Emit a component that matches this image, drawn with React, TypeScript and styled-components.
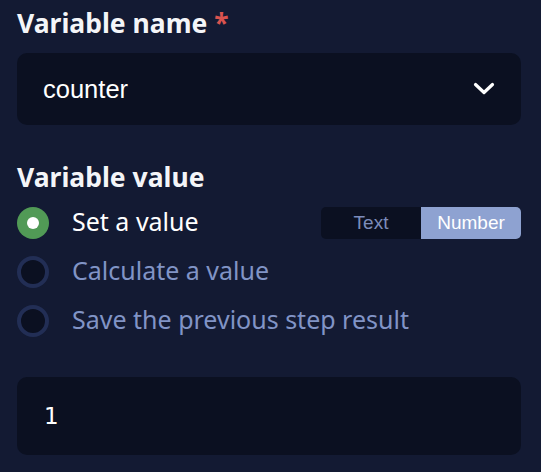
import React, { useState } from "react";
import styled, { createGlobalStyle } from "styled-components";

const Global = createGlobalStyle`
  html, body { margin: 0; padding: 0; background: #131a33; }
  body { font-family: "Noto Sans", sans-serif; }
`;

const Page = styled.div`
  width: 541px;
  height: 472px;
  box-sizing: border-box;
  padding: 5px 20px 0 17px;
  background: #131a33;
  display: flex;
  flex-direction: column;
`;

const Label = styled.div<{ $mt?: number }>`
  font-family: "Noto Sans", sans-serif;
  font-weight: 700;
  font-size: 26.5px;
  line-height: 36px;
  color: #f4f5f8;
  margin-top: ${(p) => p.$mt ?? 0}px;
`;

const Star = styled.span`
  color: #d9534f;
  margin-left: 7px;
`;

const Select = styled.div`
  margin-top: 12px;
  height: 72px;
  border-radius: 10px;
  background: #0b1021;
  display: flex;
  align-items: center;
  justify-content: space-between;
  padding: 0 26px 0 26px;
  color: #ffffff;
  font-family: "Liberation Sans", Arial, sans-serif;
  font-size: 25.5px;
`;

const Options = styled.div`
  margin-top: 12px;
  display: flex;
  flex-direction: column;
  gap: 17px;
`;

const Row = styled.div`
  display: flex;
  align-items: center;
  height: 32px;
`;

const Radio = styled.div<{ $on?: boolean }>`
  width: 32px;
  height: 32px;
  box-sizing: border-box;
  border-radius: 50%;
  flex-shrink: 0;
  display: flex;
  align-items: center;
  justify-content: center;
  background: ${(p) => (p.$on ? "#519a56" : "#0b1021")};
  border: ${(p) => (p.$on ? "none" : "4px solid #222e55")};
  &::after {
    content: "";
    display: ${(p) => (p.$on ? "block" : "none")};
    width: 12px;
    height: 12px;
    border-radius: 50%;
    background: #ffffff;
  }
`;

const OptText = styled.span<{ $on?: boolean }>`
  margin-left: 23px;
  padding-bottom: 4px;
  font-family: "Noto Sans", sans-serif;
  font-size: 25px;
  line-height: 32px;
  color: ${(p) => (p.$on ? "#ffffff" : "#8194c6")};
  flex: 1;
`;

const Toggle = styled.div`
  display: flex;
  width: 200px;
  height: 32px;
  border-radius: 5px;
  overflow: hidden;
  background: #0b1021;
`;

const ToggleBtn = styled.div<{ $on?: boolean }>`
  flex: 1;
  display: flex;
  align-items: center;
  justify-content: center;
  font-family: "Liberation Sans", Arial, sans-serif;
  font-size: 19px;
  background: ${(p) => (p.$on ? "#8ea2d1" : "transparent")};
  color: ${(p) => (p.$on ? "#ffffff" : "#7c8cbb")};
`;

const ValueInput = styled.div`
  margin-top: 40px;
  height: 78px;
  border-radius: 10px;
  background: #0b1021;
  display: flex;
  align-items: center;
  padding-left: 27px;
  color: #ffffff;
  font-family: "DejaVu Sans", sans-serif;
  font-size: 23px;
`;

const Chevron = () => (
  <svg width="22" height="14" viewBox="0 0 22 14" fill="none">
    <path d="M2.5 2.5 L11 10.5 L19.5 2.5" stroke="#ffffff" strokeWidth="3.2" strokeLinecap="round" strokeLinejoin="round" />
  </svg>
);

export default function App() {
  const [mode, setMode] = useState<"text" | "number">("number");
  const opts = ["Set a value", "Calculate a value", "Save the previous step result"];
  return (
    <>
      <Global />
      <Page>
        <Label>
          Variable name<Star>*</Star>
        </Label>
        <Select>
          <span>counter</span>
          <Chevron />
        </Select>
        <Label $mt={34}>Variable value</Label>
        <Options>
          {opts.map((o, i) => (
            <Row key={o}>
              <Radio $on={i === 0} />
              <OptText $on={i === 0}>{o}</OptText>
              {i === 0 && (
                <Toggle>
                  <ToggleBtn $on={mode === "text"} onClick={() => setMode("text")}>Text</ToggleBtn>
                  <ToggleBtn $on={mode === "number"} onClick={() => setMode("number")}>Number</ToggleBtn>
                </Toggle>
              )}
            </Row>
          ))}
        </Options>
        <ValueInput>1</ValueInput>
      </Page>
    </>
  );
}
